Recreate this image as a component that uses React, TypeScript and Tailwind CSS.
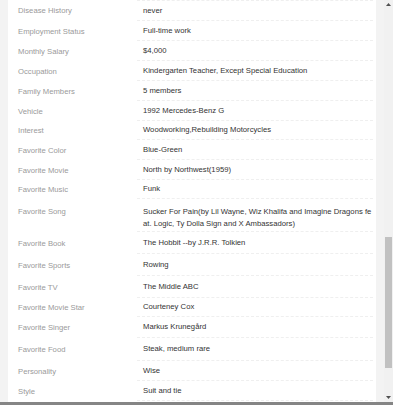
const rows = [
  { label: 'Disease History', value: 'never', h: 'h-[21px] border-t' },
  { label: 'Employment Status', value: 'Full-time work', h: 'h-[20px]' },
  { label: 'Monthly Salary', value: '$4,000', h: 'h-[20px]' },
  { label: 'Occupation', value: 'Kindergarten Teacher, Except Special Education', h: 'h-[20px]' },
  { label: 'Family Members', value: '5 members', h: 'h-[20px]' },
  { label: 'Vehicle', value: '1992 Mercedes-Benz G', h: 'h-[20px]' },
  { label: 'Interest', value: 'Woodworking,Rebuilding Motorcycles', h: 'h-[19px]' },
  { label: 'Favorite Color', value: 'Blue-Green', h: 'h-[20px]' },
  { label: 'Favorite Movie', value: 'North by Northwest(1959)', h: 'h-[20px]' },
  { label: 'Favorite Music', value: 'Funk', h: 'h-[19px]' },
  {
    label: 'Favorite Song',
    value: 'Sucker For Pain(by Lil Wayne, Wiz Khalifa and Imagine Dragons feat. Logic, Ty Dolla Sign and X Ambassadors)',
    h: 'h-[33px]',
    multi: true,
  },
  { label: 'Favorite Book', value: 'The Hobbit --by J.R.R. Tolkien', h: 'h-[22px]' },
  { label: 'Favorite Sports', value: 'Rowing', h: 'h-[22px]' },
  { label: 'Favorite TV', value: 'The Middle ABC', h: 'h-[22px]' },
  { label: 'Favorite Movie Star', value: 'Courteney Cox', h: 'h-[19px]' },
  { label: 'Favorite Singer', value: 'Markus Krunegård', h: 'h-[21px]' },
  { label: 'Favorite Food', value: 'Steak, medium rare', h: 'h-[23px]' },
  { label: 'Personality', value: 'Wise', h: 'h-[20px]' },
  { label: 'Style', value: 'Suit and tie', h: 'h-[20px]' },
];

function ScrollBar() {
  return (
    <div className="w-[9px] flex flex-col bg-[#f1f1f1]">
      {/* up arrow */}
      <div className="h-[9px] flex items-center justify-center">
        <svg width="5" height="3" viewBox="0 0 5 3">
          <path d="M0 3 L2.5 0 L5 3 Z" fill="#505050" />
        </svg>
      </div>
      <div className="flex-1 flex flex-col px-[1px]">
        <div className="h-[228px]" />
        <div className="h-[131px] bg-[#c1c1c1]" />
      </div>
      {/* down arrow */}
      <div className="h-[9px] flex items-center justify-center">
        <svg width="5" height="3" viewBox="0 0 5 3">
          <path d="M0 0 L5 0 L2.5 3 Z" fill="#505050" />
        </svg>
      </div>
    </div>
  );
}

export default function App() {
  return (
    <div className="w-[393px] h-[405px] overflow-hidden flex flex-col bg-[#f3f3f3] font-['Liberation_Sans',Arial,sans-serif]">
      <div className="h-[402px] flex">
        <div className="w-[368px] ml-[8px] bg-white overflow-hidden">
          {rows.map(r => (
            <div key={r.label} className="flex">
              <div
                className={`w-[129px] pl-[10px] pt-[1px] text-[7.7px] text-[#9a9a9a] ${
                  r.multi ? 'pt-[7px] leading-[12px]' : 'flex items-center leading-[12px]'
                }`}
              >
                {r.label}
              </div>
              <div
                className={`w-[236px] pl-[6px] border-b border-dashed border-[#efefef] text-[7.7px] text-[#333] ${r.h} ${
                  r.multi ? 'pt-[7px] leading-[12px] break-all' : 'flex items-center leading-[12px]'
                }`}
              >
                {r.value}
              </div>
            </div>
          ))}
        </div>
        <div className="w-[8px]" />
        <ScrollBar />
      </div>
      <div className="h-[3px] bg-[#858585]" />
    </div>
  );
}
